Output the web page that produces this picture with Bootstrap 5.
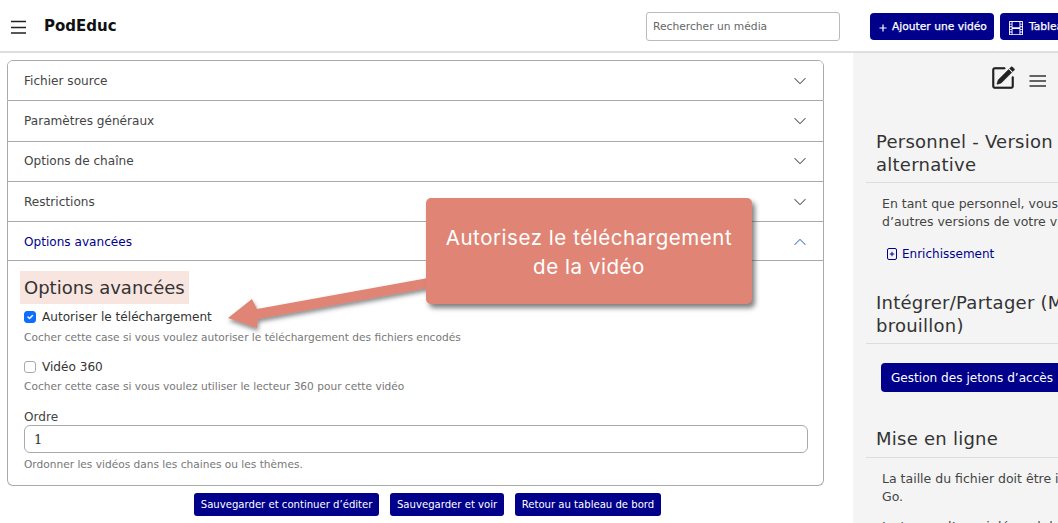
<!DOCTYPE html>
<html lang="fr">
<head>
<meta charset="utf-8">
<title>PodEduc</title>
<link href="https://cdn.jsdelivr.net/npm/bootstrap@5.3.0/dist/css/bootstrap.min.css" rel="stylesheet">
<style>
html,body{height:523px;overflow:hidden}
body{font-family:"DejaVu Sans",sans-serif;font-size:12.1px;color:#333;width:1058px;position:relative}
.topbar{height:53px;border-bottom:2px solid #dedede;background:#fff;padding:2px 0 0 11px;width:1240px;flex-wrap:nowrap}
.brand-name{font-size:15px;font-weight:700;color:#111;margin-left:17px;width:602px}
.search-input{width:194px;height:29px;font-size:10.7px;padding:0 6px;border-radius:3px;border-color:#bbb;color:#555;margin-right:30px}
.search-input::placeholder{color:#666}
.btn-pod{background:#00008b;border:0;color:#fff;border-radius:4px}
.btn-top{font-size:10.7px;-webkit-text-stroke:.25px #fff;height:27px;padding:2px 7px 0 9px;margin-right:6px;white-space:nowrap;display:inline-flex;align-items:center;gap:5px}
.film-icon{margin-right:1px}
.page-wrap{width:1240px;height:470px}
.form-col{width:853px;flex:none;padding:7px 29px 0 7px}
.acc-pod{--bs-accordion-border-color:#aaa;--bs-accordion-border-radius:6px;--bs-accordion-inner-border-radius:5px;--bs-accordion-btn-padding-x:16px;--bs-accordion-btn-padding-y:0;--bs-accordion-active-color:#00008b;--bs-accordion-active-bg:#fff;--bs-accordion-btn-focus-box-shadow:none;--bs-accordion-btn-icon-width:14px;--bs-accordion-body-padding-x:16px;--bs-accordion-body-padding-y:0}
.acc-pod .accordion-button{height:39.3px;padding-top:.5px;font-size:12.1px;color:#444;box-shadow:none}
.acc-pod .accordion-button::after{opacity:.75}
.acc-pod .accordion-button:not(.collapsed){color:#00008b;box-shadow:inset 0 -1px 0 #aaa}
.acc-pod .accordion-body{height:224px;padding:10px 15px 0 16px}
.adv-title{font-size:18px;font-weight:400;background:#f8e5e0;color:#333;display:inline-block;margin:0 0 0 -4px;padding:2px 4px 0;height:33px;line-height:29px}
.check-row{margin:3px 0 0;padding-left:18px;min-height:0;line-height:20px;color:#333}
.check-row .form-check-input{margin-left:-18px;margin-top:4px;width:12px;height:12px;border-color:#aaa}
.check-row .form-check-input:checked{background-color:#0d6efd;border-color:#0d6efd}
.help-line{font-size:10.6px;color:#777;margin-top:3px;line-height:14px}
.help-tight{margin-top:2px}
.help-last{margin-top:4px}
.help-gap{margin-top:13px}
.order-label{margin:16px 0 0;color:#444;line-height:16px}
.order-input{height:28px;font-family:"DejaVu Serif","Liberation Serif",serif;font-size:13px;padding:0 9px;border-color:#aaa;color:#333}
.action-row{margin-top:7px;gap:11.5px;padding-left:24px}
.btn-save{font-size:10.1px;height:23px;padding:0 6.5px;border-radius:3px;white-space:nowrap}
.side-col{width:387px;flex:none;background:#f4f4f4;padding:0 0 0 13px;height:470px;overflow:hidden}
.side-tools{height:71px;padding:13px 0 0 125px;gap:14px;align-items:flex-start}
.tool-bars{margin-top:9px}
.side-head{font-size:18px;font-weight:400;color:#333;line-height:22.5px;margin:0;padding:7px 0 6px 10px;border-bottom:1px solid #ddd;letter-spacing:.25px}
.head-mid{margin-top:20px}
.head-low{margin-top:29px}
.side-text{margin:12px 0 0;padding-left:16px;line-height:18px;color:#444;font-size:12.5px;white-space:nowrap}
.side-link{color:#00008b;text-decoration:none;display:inline-flex;align-items:center;gap:5px;margin:14px 0 0 21px;font-size:12px;line-height:18px}
.token-btn{font-size:12.1px;height:29px;padding:0 10px;margin:19px 0 0 15px;border-radius:4px;width:190px;text-align:left}
.callout-box{position:absolute;left:426px;top:198px;width:326px;height:106px;background:#e08575;border-radius:5px;box-shadow:3px 4px 5px rgba(60,60,60,.65);color:#fff;font-family:"Inter","Open Sans",sans-serif;font-size:20.5px;font-weight:400;line-height:29px;letter-spacing:.55px;text-align:center;padding:25px 8px 0}
.arrow-svg{position:absolute;left:0;top:0;pointer-events:none}
</style>
</head>
<body>
<nav class="topbar d-flex align-items-center">
  <svg width="16" height="14" viewBox="0 0 16 14" aria-hidden="true"><path d="M0 1.5h15M0 7.5h15M0 13h15" stroke="#222" stroke-width="1.3" fill="none"/></svg>
  <span class="brand-name">PodEduc</span>
  <input class="form-control search-input" type="text" placeholder="Rechercher un média">
  <a class="btn btn-pod btn-top" href="#"><svg width="8" height="8" viewBox="0 0 8 8" aria-hidden="true"><path d="M4 .5v7M.5 4h7" stroke="#fff" stroke-width="1.2"/></svg>Ajouter une vidéo</a>
  <a class="btn btn-pod btn-top" href="#"><svg class="film-icon" width="14" height="14" viewBox="0 0 16 16" fill="#fff" aria-hidden="true"><path d="M0 1a1 1 0 0 1 1-1h14a1 1 0 0 1 1 1v14a1 1 0 0 1-1 1H1a1 1 0 0 1-1-1V1zm4 0v6h8V1H4zm8 8H4v6h8V9zM1 1v2h2V1H1zm2 3H1v2h2V4zM1 7v2h2V7H1zm2 3H1v2h2v-2zm-2 3v2h2v-2H1zM15 1h-2v2h2V1zm-2 3v2h2V4h-2zm2 3h-2v2h2V7zm-2 3v2h2v-2h-2zm2 3h-2v2h2v-2z"/></svg>Tableau de bord</a>
</nav>
<div class="page-wrap d-flex">
  <main class="form-col">
    <div class="accordion acc-pod">
      <div class="accordion-item"><h2 class="accordion-header"><button class="accordion-button collapsed" type="button">Fichier source</button></h2></div>
      <div class="accordion-item"><h2 class="accordion-header"><button class="accordion-button collapsed" type="button">Paramètres généraux</button></h2></div>
      <div class="accordion-item"><h2 class="accordion-header"><button class="accordion-button collapsed" type="button">Options de chaîne</button></h2></div>
      <div class="accordion-item"><h2 class="accordion-header"><button class="accordion-button collapsed" type="button">Restrictions</button></h2></div>
      <div class="accordion-item">
        <h2 class="accordion-header"><button class="accordion-button" type="button">Options avancées</button></h2>
        <div class="accordion-collapse collapse show">
          <div class="accordion-body">
            <h3 class="adv-title">Options avancées</h3>
            <div class="form-check check-row"><input class="form-check-input" type="checkbox" id="dl" checked><label class="form-check-label" for="dl">Autoriser le téléchargement</label></div>
            <div class="help-line">Cocher cette case si vous voulez autoriser le téléchargement des fichiers encodés</div>
            <div class="form-check check-row help-gap"><input class="form-check-input" type="checkbox" id="v360"><label class="form-check-label" for="v360">Vidéo 360</label></div>
            <div class="help-line help-tight">Cocher cette case si vous voulez utiliser le lecteur 360 pour cette vidéo</div>
            <div class="order-label">Ordre</div>
            <input class="form-control order-input" type="text" value="1">
            <div class="help-line help-last">Ordonner les vidéos dans les chaines ou les thèmes.</div>
          </div>
        </div>
      </div>
    </div>
    <div class="action-row d-flex justify-content-center">
      <a class="btn btn-pod btn-save d-inline-flex align-items-center" href="#">Sauvegarder et continuer d’éditer</a>
      <a class="btn btn-pod btn-save d-inline-flex align-items-center" href="#">Sauvegarder et voir</a>
      <a class="btn btn-pod btn-save d-inline-flex align-items-center" href="#">Retour au tableau de bord</a>
    </div>
  </main>
  <aside class="side-col">
    <div class="side-tools d-flex">
      <svg width="24" height="24" viewBox="0 0 16 16" fill="#222" stroke="#222" stroke-width=".45" aria-hidden="true"><path d="M15.502 1.94a.5.5 0 0 1 0 .706L14.459 3.69l-2-2L13.502.646a.5.5 0 0 1 .707 0l1.293 1.293zm-1.75 2.456-2-2L4.939 9.21a.5.5 0 0 0-.121.196l-.805 2.414a.25.25 0 0 0 .316.316l2.414-.805a.5.5 0 0 0 .196-.12l6.813-6.814z"/><path d="M1 13.5A1.5 1.5 0 0 0 2.5 15h11a1.5 1.5 0 0 0 1.5-1.5v-6a.5.5 0 0 0-1 0v6a.5.5 0 0 1-.5.5h-11a.5.5 0 0 1-.5-.5v-11a.5.5 0 0 1 .5-.5H9a.5.5 0 0 0 0-1H2.5A1.5 1.5 0 0 0 1 2.5v11z"/></svg>
      <svg class="tool-bars" width="18" height="12" viewBox="0 0 18 12" aria-hidden="true"><path d="M.5 1h16.5M.5 6h16.5M.5 11h16.5" stroke="#333" stroke-width="1.4" fill="none"/></svg>
    </div>
    <h4 class="side-head">Personnel - Version<br>alternative</h4>
    <p class="side-text">En tant que personnel, vous pouvez ajouter<br>d’autres versions de votre vidéo.</p>
    <a class="side-link" href="#"><svg width="10" height="12" viewBox="0 0 10 12" aria-hidden="true"><rect x=".5" y=".5" width="9" height="11" rx="1.5" fill="none" stroke="#00008b"/><path d="M5 3.8v4.4M2.8 6h4.4" stroke="#00008b"/></svg>Enrichissement</a>
    <h4 class="side-head head-mid">Intégrer/Partager (Mode<br>brouillon)</h4>
    <a class="btn btn-pod token-btn d-flex align-items-center" href="#">Gestion des jetons d’accès</a>
    <h4 class="side-head head-low">Mise en ligne</h4>
    <p class="side-text">La taille du fichier doit être inférieure à 4<br>Go.</p>
    <p class="side-text">Le temps d’envoi dépend de la connexion.</p>
  </aside>
</div>
<svg class="arrow-svg" width="440" height="340" viewBox="0 0 440 340" aria-hidden="true">
  <defs><filter id="ashadow" x="-10%" y="-30%" width="120%" height="170%"><feDropShadow dx="1" dy="3" stdDeviation="2" flood-color="#444" flood-opacity=".6"/></filter></defs>
  <polygon points="228,318 252,299 257,309 428,278 428,288 258,319 257,328" fill="#e08575" filter="url(#ashadow)"/>
</svg>
<div class="callout-box">Autorisez le téléchargement<br>de la vidéo</div>
<script src="https://cdn.jsdelivr.net/npm/bootstrap@5.3.0/dist/js/bootstrap.bundle.min.js"></script>
</body>
</html>
